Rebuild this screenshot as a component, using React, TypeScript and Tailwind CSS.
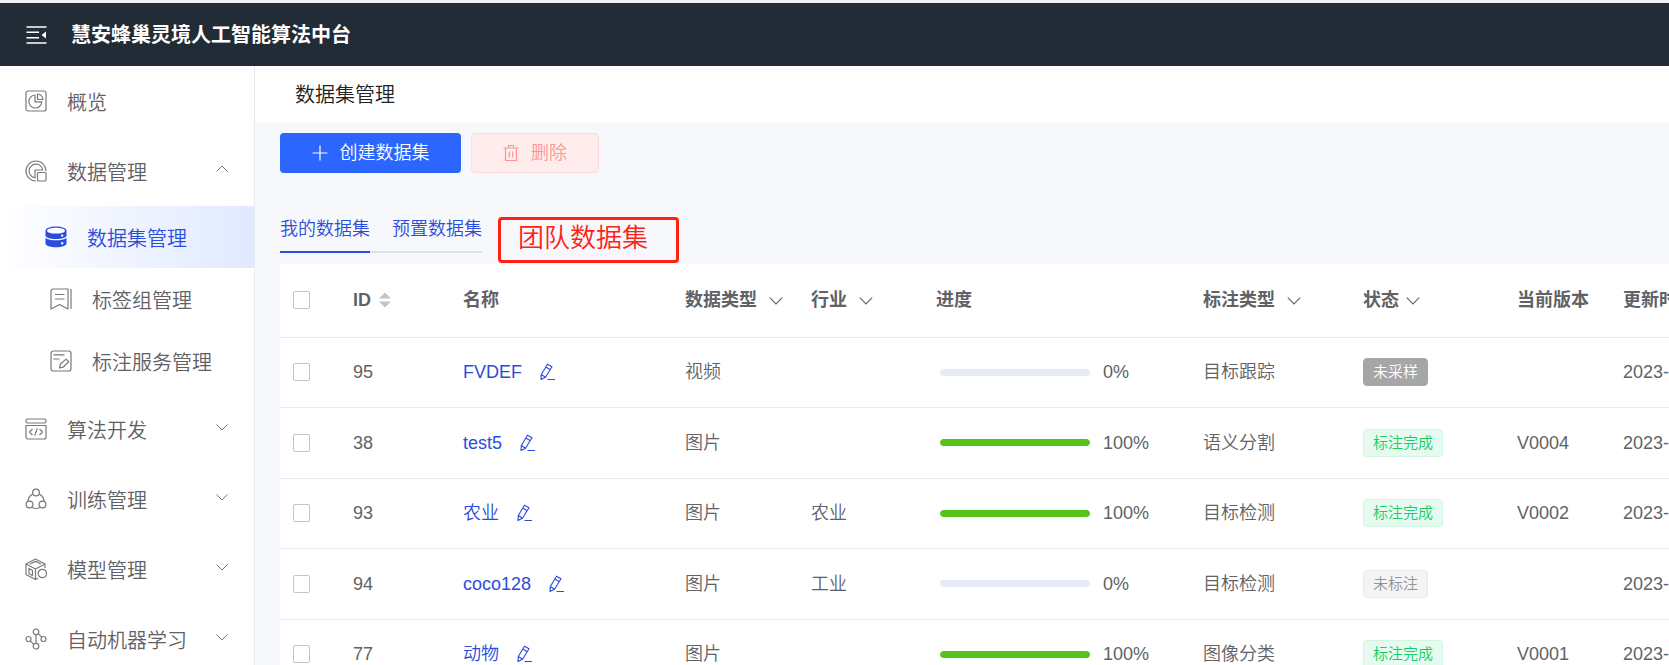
import type { ReactNode } from "react";

function Glyph({ children, className = "size-[22px]", fill = "none", width = 1.2 }: { children: ReactNode; className?: string; fill?: string; width?: number }) {
  return (
    <svg viewBox="0 0 22 22" className={className + " shrink-0"} fill={fill} stroke="currentColor" strokeWidth={width} strokeLinejoin="round" aria-hidden="true">
      {children}
    </svg>
  );
}

const icons = {
  overview: (
    <Glyph>
      <rect x="1" y="1" width="20" height="20" rx="2" />
      <path d="M10 5a6.500 6.500 0 1 0 6.800 6.800H10z" />
      <path d="M12.500 4v5.500H18A5.600 5.600 0 0 0 12.500 4z" />
    </Glyph>
  ),
  data: (
    <Glyph>
      <path d="M11 21A10 10 0 1 1 21 11" />
      <path d="M10 17.800A6.900 6.900 0 1 1 17.800 10H10z" />
      <rect x="12.500" y="12.500" width="8.500" height="8.500" rx="1" />
    </Glyph>
  ),
  code: (
    <Glyph>
      <rect x="1" y="1" width="20" height="4" rx="1.500" />
      <path d="M1 7.500h20V19a2 2 0 0 1-2 2H3a2 2 0 0 1-2-2z" />
      <path d="M7.500 11 4.500 14l3 3M14.500 11l3 3-3 3M12.300 10.500l-2.600 7" />
    </Glyph>
  ),
  train: (
    <Glyph>
      <circle cx="11" cy="4.500" r="3.400" />
      <circle cx="4.500" cy="16.500" r="3.400" />
      <circle cx="17.500" cy="16.500" r="3.400" />
      <path d="M7.800 6A9 9 0 0 0 3 13M14.200 6A9 9 0 0 1 19 13M7 19.500a9 9 0 0 0 8 0" />
    </Glyph>
  ),
  model: (
    <Glyph>
      <path d="M20 10V6L10.500 1 1 6v10.500L10.500 21.500l2.500-1.200M1 6l9.500 5L20 6M10.500 11v10.500M5 6l5.500-2.600L16 6M4 10.500v5l3.500 2v-5z" />
      <circle cx="17.300" cy="15.500" r="4.200" />
    </Glyph>
  ),
  auto: (
    <Glyph>
      <circle cx="11" cy="3.800" r="2.800" />
      <circle cx="11" cy="18.200" r="2.800" />
      <circle cx="3.500" cy="11" r="2.500" />
      <circle cx="18.500" cy="11" r="2.500" />
      <path d="M11 6.600v8.800M5.300 12.800l3.500 3.500M13.200 5.700l3.500 3.500" />
    </Glyph>
  ),
  dataset: (
    <Glyph fill="currentColor" width={0}>
      <path fillRule="evenodd" d="M11 0.500c6 0 10.500 1.800 10.500 4v5c0 2-4.500 3.500-10.500 3.500S0.500 11.500 0.500 9.500v-5c0-2.200 4.500-4 10.500-4zM11 1.800c-5 0-9 1.200-9 2.900s4 2.900 9 2.900 9-1.200 9-2.900-4-2.900-9-2.900zM16 9.600a1.200 1.200 0 1 0 2.400 0 1.200 1.200 0 1 0-2.400 0z" />
      <path fillRule="evenodd" d="M0.500 12c2 1.600 6 2.300 10.500 2.300s8.500-.7 10.500-2.300v5.500c0 2-4.500 3.800-10.500 3.800S0.500 19.500 0.500 17.500zM16 17.200a1.200 1.200 0 1 0 2.400 0 1.200 1.200 0 1 0-2.400 0z" />
    </Glyph>
  ),
  tags: (
    <Glyph>
      <path d="M3 1h15v20L9.500 16.500 1 21V3a2 2 0 0 1 2-2zM5 6.500h9.500M5 11h9.500M21 1v20" />
    </Glyph>
  ),
  note: (
    <Glyph>
      <rect x="1" y="1" width="20" height="20" rx="2.500" />
      <path d="M3.500 4.800h11M3.500 9h6M9.500 17.800l.8-3.500 5.800-5.200 2.600 2.600-5.700 5.500z" />
    </Glyph>
  ),
};

function Chevron({ up = false, className = "w-3 h-2" }: { up?: boolean; className?: string }) {
  return (
    <svg viewBox="0 0 12 8" className={className + " shrink-0"} fill="none" stroke="currentColor" strokeWidth="1" aria-hidden="true">
      <path d={up ? "M.5 6.500 6 1l5.500 5.500" : "M.5 1.500 6 7l5.500-5.500"} />
    </svg>
  );
}

function MenuRow({ icon, label, open }: { icon: ReactNode; label: string; open?: boolean }) {
  return (
    <a href="#" className="flex h-[70px] items-center pl-[25px] pr-[26px] text-[#77797e]">
      {icon}
      <span className="ml-5 flex-1 pt-1 text-[20px] leading-7 text-[#5f6165]">{label}</span>
      {open !== undefined && (
        <span className="pb-[5px]">
          <Chevron up={open} />
        </span>
      )}
    </a>
  );
}

function SubRow({ icon, label, active = false }: { icon: ReactNode; label: string; active?: boolean }) {
  return (
    <a
      href="#"
      className={"flex h-[62px] items-center " + (active ? "bg-linear-to-r from-white to-[#e0e9ff] pl-[45px] text-[#2b4ddb]" : "pl-[50px] text-[#77797e]")}
    >
      {icon}
      <span className={"ml-5 pt-1 text-[20px] leading-7 " + (active ? "text-[#2b4ddb]" : "text-[#5f6165]")}>{label}</span>
    </a>
  );
}

function Sidebar() {
  return (
    <nav className="w-[255px] shrink-0 border-r border-[#ebecf0] bg-white">
      <MenuRow icon={icons.overview} label="概览" />
      <MenuRow icon={icons.data} label="数据管理" open />
      <div className="pb-0.5">
        <SubRow icon={icons.dataset} label="数据集管理" active />
        <SubRow icon={icons.tags} label="标签组管理" />
        <SubRow icon={icons.note} label="标注服务管理" />
      </div>
      <MenuRow icon={icons.code} label="算法开发" open={false} />
      <MenuRow icon={icons.train} label="训练管理" open={false} />
      <MenuRow icon={icons.model} label="模型管理" open={false} />
      <MenuRow icon={icons.auto} label="自动机器学习" open={false} />
    </nav>
  );
}

type Status = "unsampled" | "done" | "unlabeled";
type Row = { id: number; name: string; type: string; industry: string; progress: number; label: string; status: Status; version: string };

const rows: Row[] = [
  { id: 95, name: "FVDEF", type: "视频", industry: "", progress: 0, label: "目标跟踪", status: "unsampled", version: "" },
  { id: 38, name: "test5", type: "图片", industry: "", progress: 100, label: "语义分割", status: "done", version: "V0004" },
  { id: 93, name: "农业", type: "图片", industry: "农业", progress: 100, label: "目标检测", status: "done", version: "V0002" },
  { id: 94, name: "coco128", type: "图片", industry: "工业", progress: 0, label: "目标检测", status: "unlabeled", version: "" },
  { id: 77, name: "动物", type: "图片", industry: "", progress: 100, label: "图像分类", status: "done", version: "V0001" },
];

const statusText: Record<Status, string> = { unsampled: "未采样", done: "标注完成", unlabeled: "未标注" };
const statusStyle: Record<Status, string> = {
  unsampled: "border-[#a6a6a6] bg-[#a6a6a6] text-white",
  done: "border-[#d0f5e0] bg-[#e7faf0] text-[#13ce66]",
  unlabeled: "border-[#e9e9eb] bg-[#f4f4f5] text-[#909399]",
};

function Check({ label }: { label: string }) {
  return <input type="checkbox" aria-label={label} className="block h-[18px] w-[17px] appearance-none rounded-xs border border-[#c0c4cc] bg-white" />;
}

function Pencil() {
  return (
    <svg viewBox="0 0 16 18" className="h-[18px] w-4" fill="none" stroke="currentColor" strokeWidth="1.100" strokeLinejoin="round" aria-hidden="true">
      <path d="M1 16.500l.3-5L7.500 1.200 12 3.800 5.500 14.200zM5.800 4l4.500 2.700M1.300 11.500l4.200 2.700M7.500 16.500H15" />
    </svg>
  );
}

function HeadCell({ label, filter, gap = "gap-3" }: { label: string; filter?: boolean; gap?: string }) {
  return (
    <th className="px-3 text-left font-bold">
      <span className={"flex items-center whitespace-nowrap " + gap}>
        {label}
        {filter && <Chevron className="h-[9px] w-[14px]" />}
      </span>
    </th>
  );
}

function DataTable() {
  return (
    <div className="overflow-hidden bg-white">
      <table className="w-full min-w-[1480px] table-fixed border-collapse text-[18px] leading-6 text-[#606266]">
        <colgroup>
          <col className="w-[61px]" />
          <col className="w-[110px]" />
          <col className="w-[222px]" />
          <col className="w-[126px]" />
          <col className="w-[125px]" />
          <col className="w-[267px]" />
          <col className="w-[160px]" />
          <col className="w-[154px]" />
          <col className="w-[106px]" />
          <col />
        </colgroup>
        <thead>
          <tr className="h-[73px] border-b border-[#e6ebf5]">
            <th className="pl-[13px]">
              <Check label="全选" />
            </th>
            <th className="px-3 text-left font-bold">
              <span className="flex items-center gap-2">
                ID
                <svg viewBox="0 0 12 16" className="h-4 w-3" fill="#c0c4cc" aria-hidden="true">
                  <path d="M6 .5 12 6.500H0zM6 15.500 12 9.500H0z" />
                </svg>
              </span>
            </th>
            <HeadCell label="名称" />
            <HeadCell label="数据类型" filter />
            <HeadCell label="行业" filter />
            <HeadCell label="进度" />
            <HeadCell label="标注类型" filter />
            <HeadCell label="状态" filter gap="gap-[7px]" />
            <HeadCell label="当前版本" />
            <HeadCell label="更新时间" />
          </tr>
        </thead>
        <tbody>
          {rows.map((row) => (
            <tr key={row.id} className="border-b border-[#e6ebf5] odd:h-[70px] even:h-[71px]">
              <td className="pl-[13px]">
                <Check label={"选择 " + row.name} />
              </td>
              <td className="px-3">{row.id}</td>
              <td className="px-3 text-[#2b4ddb]">
                <div className="flex items-center gap-[18px]">
                  <a href="#">{row.name}</a>
                  <button type="button" aria-label="编辑">
                    <Pencil />
                  </button>
                </div>
              </td>
              <td className="px-3">{row.type}</td>
              <td className="px-3">{row.industry}</td>
              <td className="px-4">
                <div className="flex items-center gap-[13px]">
                  <div className="h-[7px] w-[150px] overflow-hidden rounded-full bg-[#e6ebf5]">
                    <div className="h-full rounded-full bg-[#52c41a]" style={{ width: `${row.progress}%` }} />
                  </div>
                  <span>{row.progress}%</span>
                </div>
              </td>
              <td className="px-3">{row.label}</td>
              <td className="px-3">
                <span className={"inline-flex h-7 items-center rounded-sm border px-[9px] align-middle text-[15px] leading-5 " + statusStyle[row.status]}>{statusText[row.status]}</span>
              </td>
              <td className="px-3">{row.version}</td>
              <td className="px-3 whitespace-nowrap">2023-0</td>
            </tr>
          ))}
        </tbody>
      </table>
    </div>
  );
}

export default function App() {
  return (
    <div className="flex h-screen flex-col overflow-hidden bg-white font-['Liberation_Sans','Noto_Sans_CJK_SC',sans-serif] font-[350]">
      <header className="flex h-[66px] shrink-0 items-center gap-6 border-t-3 border-[#f0f1f3] bg-[#222c36] pl-[26px] text-white">
        <button type="button" aria-label="收起菜单">
          <svg viewBox="0 0 21 18" className="h-[18px] w-[21px]" fill="none" stroke="currentColor" strokeWidth="1.600" aria-hidden="true">
            <path d="M.5 1h20M.5 6.300H13M.5 11.700H13M.5 17h20" />
            <path d="M20 5.500v7L15.500 9z" fill="currentColor" stroke="none" />
          </svg>
        </button>
        <h1 className="text-[20px] leading-7 font-bold">慧安蜂巢灵境人工智能算法中台</h1>
      </header>
      <div className="flex min-h-0 flex-1">
        <Sidebar />
        <main className="min-w-0 flex-1 bg-[#f7f8fc]">
          <h2 className="flex h-14 items-center bg-white pt-0.5 pl-10 text-[20px] leading-7 text-[#222]">数据集管理</h2>
          <div className="pt-[11px] pl-[25px]">
            <div className="flex gap-[10px] text-[18px] leading-6">
              <button type="button" className="flex h-10 w-[181px] items-center justify-center gap-3 rounded-sm bg-[#2b66ff] text-white">
                <svg viewBox="0 0 16 16" className="size-4" stroke="currentColor" strokeWidth="1.200" aria-hidden="true">
                  <path d="M8 .5v15M.5 8h15" />
                </svg>
                创建数据集
              </button>
              <button type="button" className="flex h-10 w-32 items-center justify-center gap-3 rounded-sm border border-[#ffdada] bg-[#ffeded] text-[#ff9494]">
                <svg viewBox="0 0 16 18" className="h-[18px] w-4" fill="none" stroke="currentColor" strokeWidth="1.200" aria-hidden="true">
                  <path d="M.5 4h15M2.500 4v12.500h11V4M5.500 4V1.500h5V4M6.300 7.500v6M9.700 7.500v6" />
                </svg>
                删除
              </button>
            </div>
            <div className="mt-11 mb-px flex h-[46px] items-start gap-4">
              <div className="flex border-b-2 border-[#dfe2ea] text-[18px] leading-6 text-[#2b4ddb]">
                <button type="button" className="-mb-0.5 border-b-2 border-[#2b4ddb] pb-[10px]">我的数据集</button>
                <button type="button" className="pb-[10px] pl-[22px]">预置数据集</button>
              </div>
              <button type="button" className="flex h-[46px] w-[181px] rounded-sm border-3 border-[#ff2114] pl-[17px] text-[26px] leading-9 text-[#ff2114]">团队数据集</button>
            </div>
            <DataTable />
          </div>
        </main>
      </div>
    </div>
  );
}
